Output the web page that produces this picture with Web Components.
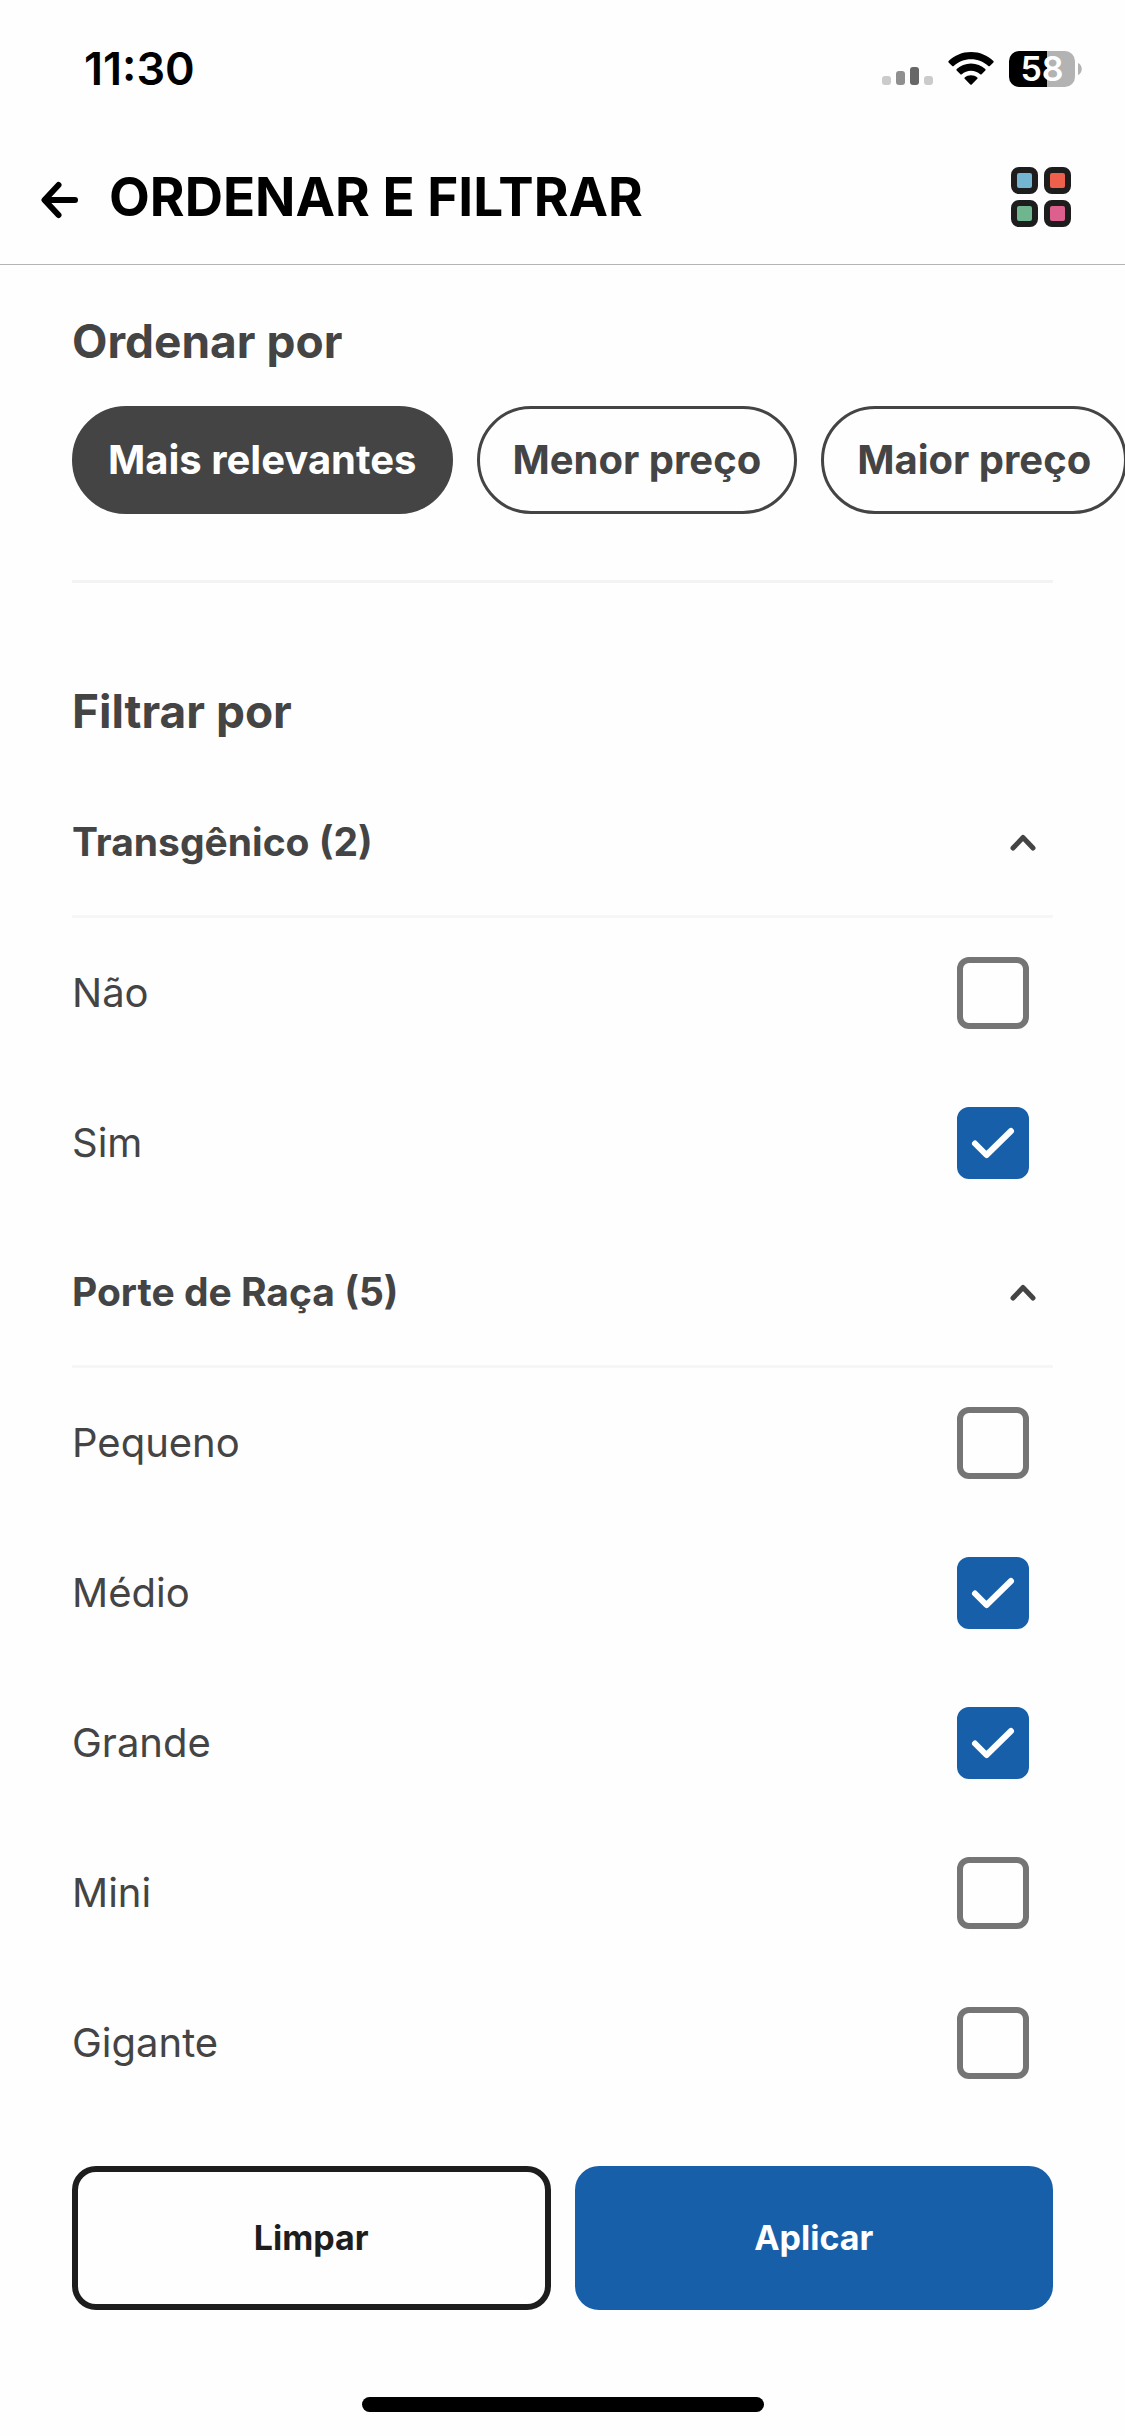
<!DOCTYPE html>
<html lang="pt-BR">
<head>
<meta charset="utf-8">
<meta name="viewport" content="width=device-width, initial-scale=1">
<title>Ordenar e filtrar</title>
<style>
  :root {
    --ink: #444444;
    --dark: #1d1d1d;
    --brand: #185fa9;
    --box: #757575;
    --gutter: 72px;
  }
  body {
    margin: 0;
    background: #fefefe;
    color: var(--ink);
    font-family: Inter, "Liberation Sans", sans-serif;
  }
</style>
</head>
<body>
<filter-screen></filter-screen>

<template id="status-bar">
  <style>
    :host { display: flex; align-items: center; justify-content: space-between; box-sizing: border-box; height: 130px; padding: 8px 43px 0 84px; color: #000; }
    time { font-size: 45px; font-weight: 600; line-height: 54px; }
    .icons { display: flex; align-items: center; }
    svg { display: block; }
    .signal { margin-right: 15px; }
    .wifi { margin-right: 15px; }
    .battery { display: grid; grid-template-columns: 66px 7px; align-items: center; }
    .level { display: grid; place-items: center; height: 36px; border-radius: 10px; background: linear-gradient(90deg, #000 38px, #b3b3b3 38px); color: #fff; font-size: 34px; font-weight: 600; line-height: 36px; }
  </style>
  <time>11:30</time>
  <div class="icons">
    <svg class="signal" width="51" height="36" viewBox="0 0 51 36" aria-hidden="true">
      <rect x="0" y="25" width="9" height="9" rx="3" fill="#cbcbcb"/>
      <rect x="14" y="20" width="9" height="14" rx="3" fill="#8f8f8f"/>
      <rect x="28" y="16" width="9" height="18" rx="3" fill="#676767"/>
      <rect x="42" y="25" width="9" height="9" rx="3" fill="#cbcbcb"/>
    </svg>
    <svg class="wifi" width="46" height="36" viewBox="0 0 46 36" aria-hidden="true">
      <path d="M23 1C14.300 1 6.400 4.400.6 10Q0 10.700.6 11.400L4.200 15Q5 15.700 5.700 15C10.200 10.800 16.300 8.200 23 8.200S35.800 10.800 40.300 15Q41 15.700 41.800 15L45.400 11.400Q46 10.700 45.400 10C39.600 4.400 31.700 1 23 1Z"/>
      <path d="M23 12.600C17.500 12.600 12.500 14.700 8.700 18.100Q8 18.800 8.700 19.500L12.400 23.200Q13.100 23.800 13.800 23.200C16.300 21 19.500 19.700 23 19.700S29.700 21 32.200 23.200Q32.900 23.800 33.600 23.200L37.300 19.500Q38 18.800 37.300 18.100C33.500 14.700 28.500 12.600 23 12.600Z"/>
      <path d="M23 24.200C20.600 24.200 18.400 25 16.700 26.400Q16 27.100 16.700 27.800L22.300 33.500Q23 34.200 23.700 33.500L29.300 27.800Q30 27.100 29.300 26.400C27.600 25 25.400 24.200 23 24.200Z"/>
    </svg>
    <div class="battery">
      <span class="level">58</span>
      <svg width="7" height="12" viewBox="0 0 7 12" aria-hidden="true"><path d="M3 0C8 2 8 10 3 12Z" fill="#b3b3b3"/></svg>
    </div>
  </div>
</template>

<template id="page-header">
  <style>
    :host { display: flex; align-items: center; box-sizing: border-box; height: 135px; padding: 0 54px 0 30px; border-bottom: 1px solid #b4b4b4; color: #000; }
    a, button { display: block; padding: 0; border: 0; background: none; color: inherit; }
    h1 { flex: 1; margin: 0 0 0 19px; font-size: 53px; font-weight: 700; line-height: 64px; }
    svg { display: block; }
    .tile rect { stroke: var(--dark); stroke-width: 6; }
  </style>
  <a href="#" aria-label="Voltar">
    <svg width="60" height="60" viewBox="0 0 60 60" fill="none" stroke="currentColor" stroke-width="6" stroke-linecap="round" stroke-linejoin="round"><path d="M45 33H15M28.500 18L14.500 33L28.500 48"/></svg>
  </a>
  <h1><slot></slot></h1>
  <button type="button" aria-label="Menu">
    <svg class="tile" width="60" height="60" viewBox="0 0 60 60">
      <rect x="3" y="3" width="21" height="21" rx="5" fill="#74b6d2"/>
      <rect x="36" y="3" width="21" height="21" rx="5" fill="#ee604b"/>
      <rect x="3" y="36" width="21" height="21" rx="5" fill="#6fb58e"/>
      <rect x="36" y="36" width="21" height="21" rx="5" fill="#dd5f8e"/>
    </svg>
  </button>
</template>

<template id="sort-chip">
  <style>
    :host { display: block; flex: none; }
    button { display: block; box-sizing: border-box; height: 108px; padding: 0 33px; border: 3px solid var(--ink); border-radius: 54px; background: transparent; color: var(--ink); font: 700 40px/48px Inter, "Liberation Sans", sans-serif; white-space: nowrap; }
    :host([selected]) button { background: var(--ink); color: #fff; }
  </style>
  <button type="button"><slot></slot></button>
</template>

<template id="filter-option">
  <style>
    :host { display: block; }
    label { display: flex; align-items: center; justify-content: space-between; height: 150px; padding-right: 24px; font-size: 40px; line-height: 48px; }
    .box { display: grid; }
    input, svg { grid-area: 1 / 1; width: 72px; height: 72px; }
    input { appearance: none; box-sizing: border-box; margin: 0; border: 6px solid var(--box); border-radius: 12px; }
    input:checked { border-color: var(--brand); background: var(--brand); }
    svg { visibility: hidden; pointer-events: none; }
    input:checked + svg { visibility: visible; }
  </style>
  <label>
    <slot></slot>
    <span class="box">
      <input type="checkbox">
      <svg viewBox="0 0 72 72" fill="none" stroke="#fff" stroke-width="6" stroke-linecap="round" stroke-linejoin="round" aria-hidden="true"><path d="M18 36.500L29.500 48L54 24"/></svg>
    </span>
  </label>
</template>

<template id="filter-group">
  <style>
    :host { display: block; }
    h3 { margin: 0; }
    button { display: flex; align-items: center; justify-content: space-between; box-sizing: border-box; width: 100%; height: 150px; padding: 0 17px 0 0; border: 0; border-bottom: 3px solid #f6f6f6; background: none; color: inherit; font: 700 39px/48px Inter, "Liberation Sans", sans-serif; }
    svg { display: block; }
    [hidden] { display: none; }
  </style>
  <h3><button type="button" aria-expanded="true"><span class="name"></span>
    <svg width="26" height="26" viewBox="0 0 26 26" fill="none" stroke="currentColor" stroke-width="5" stroke-linecap="round" stroke-linejoin="round" aria-hidden="true"><path d="M3 19L13 8.500L23 19"/></svg>
  </button></h3>
  <div class="options"><slot></slot></div>
</template>

<template id="action-button">
  <style>
    :host { display: block; flex: 1; }
    button { display: block; box-sizing: border-box; width: 100%; height: 144px; padding: 0; border: 6px solid var(--dark); border-radius: 24px; background: transparent; color: var(--dark); font: 700 34px/42px Inter, "Liberation Sans", sans-serif; }
    :host([primary]) button { border-color: var(--brand); background: var(--brand); color: #fff; }
  </style>
  <button type="button"><slot></slot></button>
</template>

<template id="filter-screen">
  <style>
    :host { display: flex; flex-direction: column; box-sizing: border-box; min-height: 100vh; padding-bottom: 24px; }
    main { flex: 1; padding: 46px var(--gutter) 48px; }
    h2 { margin: 0; font-size: 46px; font-weight: 700; line-height: 60px; }
    .chips { display: flex; gap: 24px; margin: 35px calc(0px - var(--gutter)) 66px 0; overflow-x: auto; scrollbar-width: none; }
    hr { height: 3px; margin: 0 0 98px; border: 0; background: #f3f3f3; }
    .groups { padding-top: 27px; }
    .actions { display: flex; gap: 24px; padding: 0 var(--gutter) 87px; }
    .home { align-self: center; width: 402px; height: 15px; border-radius: 8px; background: #000; }
  </style>
  <status-bar></status-bar>
  <page-header>ORDENAR E FILTRAR</page-header>
  <main>
    <section>
      <h2>Ordenar por</h2>
      <div class="chips">
        <sort-chip selected>Mais relevantes</sort-chip>
        <sort-chip>Menor preço</sort-chip>
        <sort-chip>Maior preço</sort-chip>
      </div>
    </section>
    <hr>
    <section>
      <h2>Filtrar por</h2>
      <div class="groups">
        <filter-group name="Transgênico (2)">
          <filter-option>Não</filter-option>
          <filter-option checked>Sim</filter-option>
        </filter-group>
        <filter-group name="Porte de Raça (5)">
          <filter-option>Pequeno</filter-option>
          <filter-option checked>Médio</filter-option>
          <filter-option checked>Grande</filter-option>
          <filter-option>Mini</filter-option>
          <filter-option>Gigante</filter-option>
        </filter-group>
      </div>
    </section>
  </main>
  <div class="actions">
    <action-button>Limpar</action-button>
    <action-button primary>Aplicar</action-button>
  </div>
  <div class="home"></div>
</template>

<script>
  class TemplateElement extends HTMLElement {
    constructor() {
      super();
      const template = document.getElementById(this.localName);
      this.attachShadow({ mode: 'open' }).append(document.importNode(template.content, true));
    }
  }

  class FilterOption extends TemplateElement {
    connectedCallback() {
      this.shadowRoot.querySelector('input').checked = this.hasAttribute('checked');
    }
  }

  class FilterGroup extends TemplateElement {
    connectedCallback() {
      const root = this.shadowRoot;
      const button = root.querySelector('button');
      root.querySelector('.name').textContent = this.getAttribute('name');
      button.onclick = () => {
        const open = button.getAttribute('aria-expanded') !== 'true';
        button.setAttribute('aria-expanded', open);
        root.querySelector('.options').hidden = !open;
      };
    }
  }

  customElements.define('status-bar', class extends TemplateElement {});
  customElements.define('page-header', class extends TemplateElement {});
  customElements.define('sort-chip', class extends TemplateElement {});
  customElements.define('action-button', class extends TemplateElement {});
  customElements.define('filter-option', FilterOption);
  customElements.define('filter-group', FilterGroup);
  customElements.define('filter-screen', class extends TemplateElement {});
</script>
</body>
</html>
